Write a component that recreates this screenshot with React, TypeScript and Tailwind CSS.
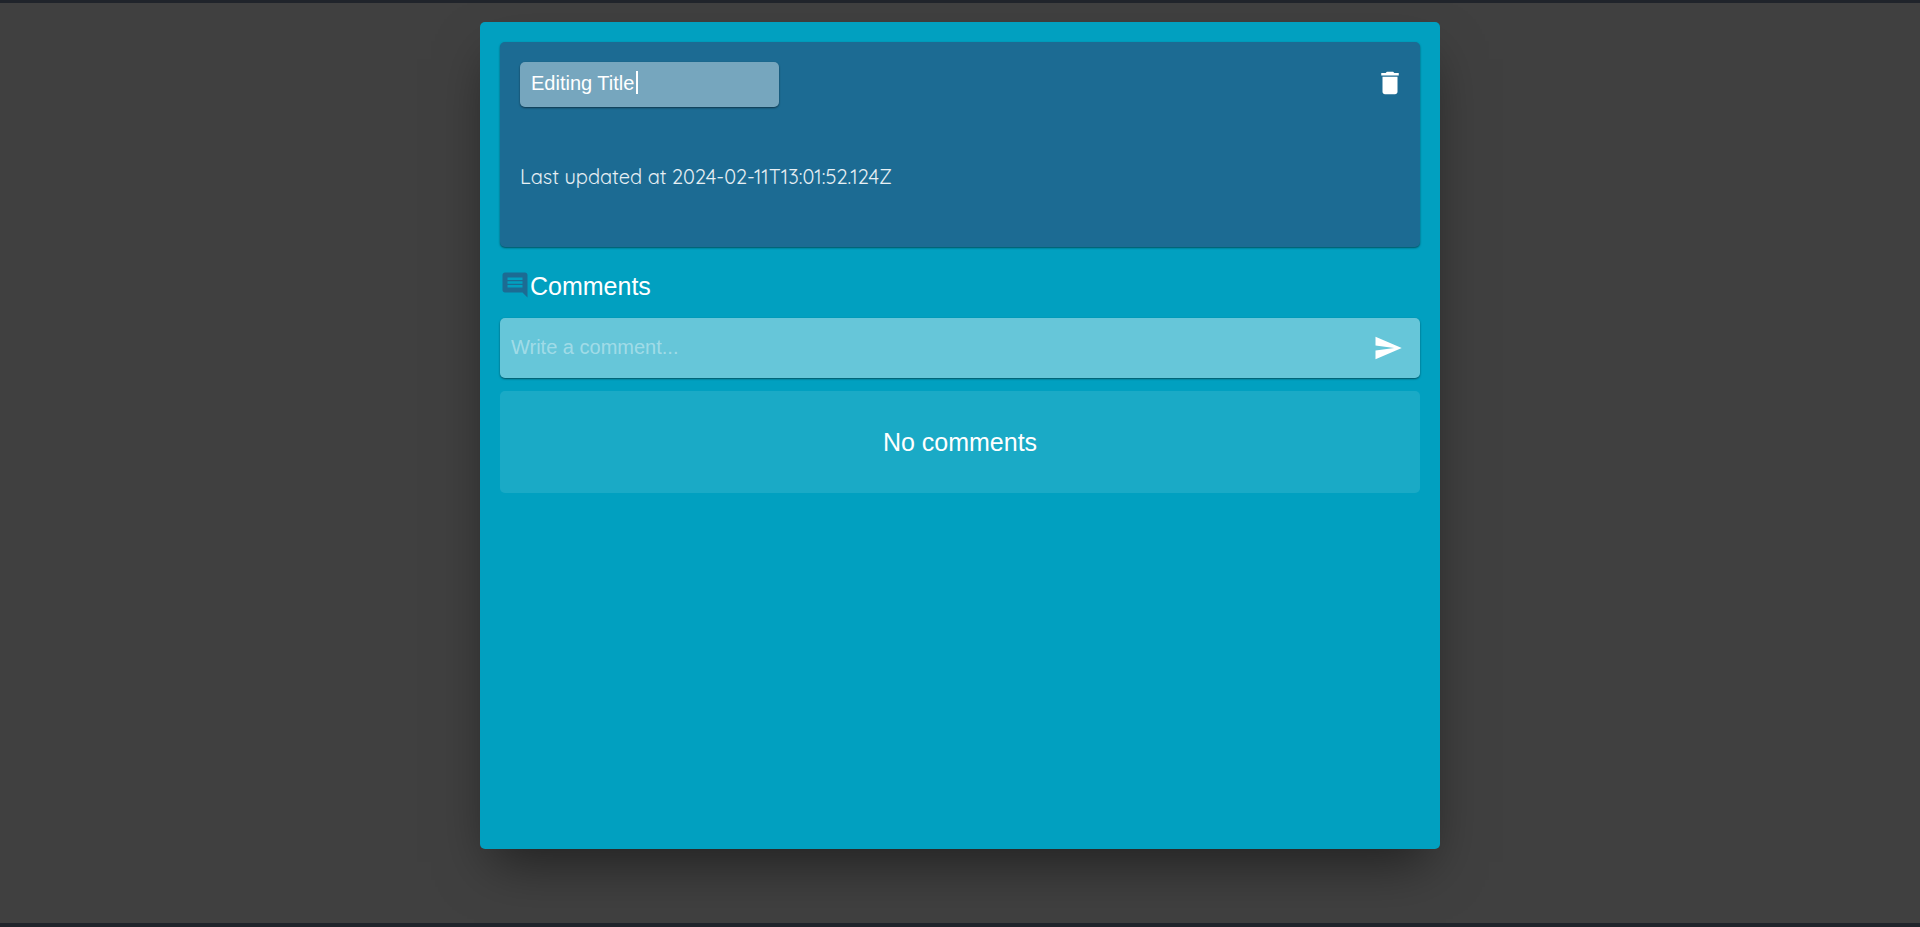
import { MdComment, MdDelete, MdSend } from "react-icons/md";

function TaskHeader() {
  return (
    <section className="flex h-[205px] flex-col rounded-[5px] bg-[#1c6b93] p-5 shadow-[0_1px_2px_rgba(0,0,0,0.5)]">
      <div className="flex items-start justify-between">
        <div className="relative">
          <input
            aria-label="Title"
            defaultValue="Editing Title"
            className="block h-[45px] w-[259px] rounded-[5px] bg-white/40 px-[11px] pb-[2px] text-xl text-white shadow-[0_1px_2px_rgba(0,0,0,0.5)] outline-none"
          />
          <span className="absolute top-[9px] left-[116px] h-[23px] w-[2px] bg-white" />
        </div>
        <button type="button" aria-label="Delete" className="mt-[6px] -mr-[5px] text-white">
          <MdDelete size={30} />
        </button>
      </div>
      <p className="mt-[55px] font-['Quicksand','Lato',sans-serif] text-xl leading-[30px] text-white/90">
        Last updated at 2024-02-11T13:01:52.124Z
      </p>
    </section>
  );
}

function Comments() {
  return (
    <section className="mt-[23px] flex flex-col">
      <h2 className="flex h-[38px] items-start text-[25px] leading-8 text-white">
        <MdComment size={30} className="text-[#1c6b93]" />
        Comments
      </h2>
      <form className="mt-[10px] flex h-[60px] items-center rounded-[5px] bg-white/40 pr-[17px] pl-[11px] shadow-[0_1px_2px_rgba(0,0,0,0.5)]">
        <input
          aria-label="Write a comment"
          placeholder="Write a comment..."
          className="min-w-0 flex-1 bg-transparent pb-[2px] text-xl text-white outline-none placeholder:text-white/40"
        />
        <button type="button" aria-label="Send" className="text-white">
          <MdSend size={30} />
        </button>
      </form>
      <div className="mt-[13px] flex h-[102px] items-center justify-center rounded-[5px] bg-white/10 pt-[2px] text-[25px] text-white">
        No comments
      </div>
    </section>
  );
}

export default function App() {
  return (
    <div className="h-screen bg-[#20242b] pt-[3px] pb-1 font-['Liberation_Sans',Arial,sans-serif]">
      <div className="flex h-full items-start justify-center overflow-hidden bg-[#404040] pt-[19px]">
        <main className="min-h-[827px] w-1/2 rounded-[5px] bg-[#01a0c0] p-5 shadow-[0_25px_50px_-12px_rgba(0,0,0,0.5)]">
          <TaskHeader />
          <Comments />
        </main>
      </div>
    </div>
  );
}
